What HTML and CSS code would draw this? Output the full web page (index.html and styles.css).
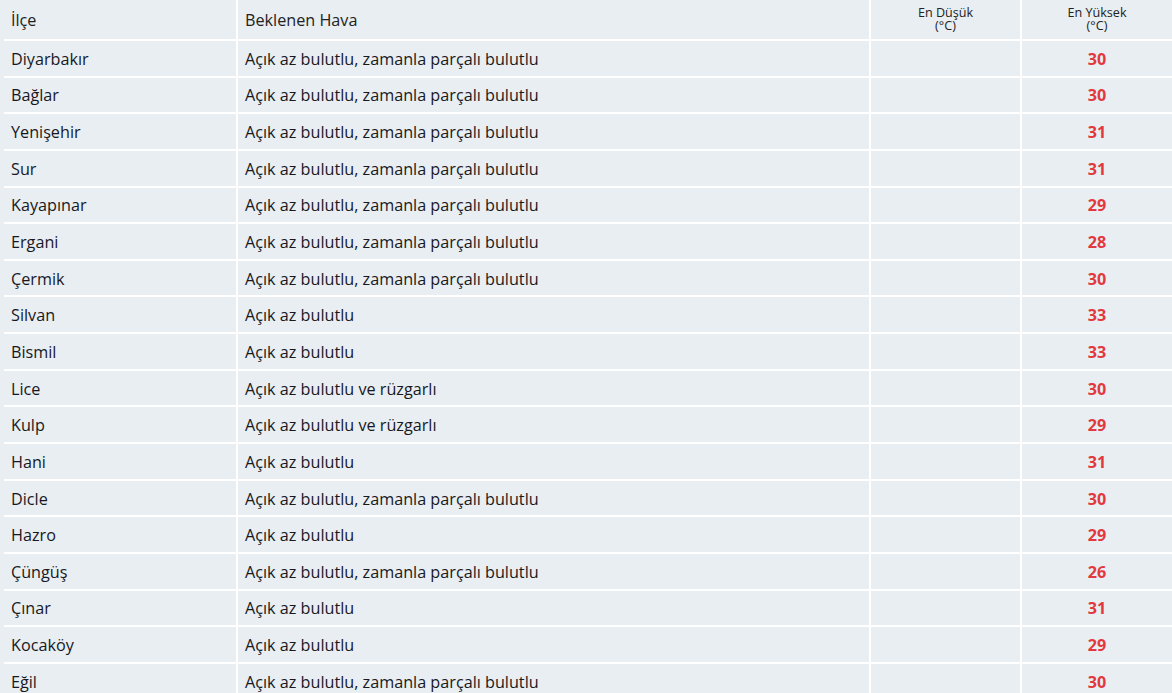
FILE: index.html
```html
<!DOCTYPE html>
<html lang="tr">
<head>
    <meta charset="UTF-8">
    <meta name="viewport" content="width=device-width, initial-scale=1.0">
    <title>Hava Durumu</title>
    <link rel="stylesheet" href="styles.css">
</head>
<body>
    <table class="forecast">
        <thead>
            <tr>
                <th class="col-name">İlçe</th>
                <th class="col-desc">Beklenen Hava</th>
                <th class="col-min small">En Düşük<br>(°C)</th>
                <th class="col-max small">En Yüksek<br>(°C)</th>
            </tr>
        </thead>
        <tbody>
            <tr><td>Diyarbakır</td><td>Açık az bulutlu, zamanla parçalı bulutlu</td><td></td><td class="max">30</td></tr>
            <tr><td>Bağlar</td><td>Açık az bulutlu, zamanla parçalı bulutlu</td><td></td><td class="max">30</td></tr>
            <tr><td>Yenişehir</td><td>Açık az bulutlu, zamanla parçalı bulutlu</td><td></td><td class="max">31</td></tr>
            <tr><td>Sur</td><td>Açık az bulutlu, zamanla parçalı bulutlu</td><td></td><td class="max">31</td></tr>
            <tr><td>Kayapınar</td><td>Açık az bulutlu, zamanla parçalı bulutlu</td><td></td><td class="max">29</td></tr>
            <tr><td>Ergani</td><td>Açık az bulutlu, zamanla parçalı bulutlu</td><td></td><td class="max">28</td></tr>
            <tr><td>Çermik</td><td>Açık az bulutlu, zamanla parçalı bulutlu</td><td></td><td class="max">30</td></tr>
            <tr><td>Silvan</td><td>Açık az bulutlu</td><td></td><td class="max">33</td></tr>
            <tr><td>Bismil</td><td>Açık az bulutlu</td><td></td><td class="max">33</td></tr>
            <tr><td>Lice</td><td>Açık az bulutlu ve rüzgarlı</td><td></td><td class="max">30</td></tr>
            <tr><td>Kulp</td><td>Açık az bulutlu ve rüzgarlı</td><td></td><td class="max">29</td></tr>
            <tr><td>Hani</td><td>Açık az bulutlu</td><td></td><td class="max">31</td></tr>
            <tr><td>Dicle</td><td>Açık az bulutlu, zamanla parçalı bulutlu</td><td></td><td class="max">30</td></tr>
            <tr><td>Hazro</td><td>Açık az bulutlu</td><td></td><td class="max">29</td></tr>
            <tr><td>Çüngüş</td><td>Açık az bulutlu, zamanla parçalı bulutlu</td><td></td><td class="max">26</td></tr>
            <tr><td>Çınar</td><td>Açık az bulutlu</td><td></td><td class="max">31</td></tr>
            <tr><td>Kocaköy</td><td>Açık az bulutlu</td><td></td><td class="max">29</td></tr>
            <tr><td>Eğil</td><td>Açık az bulutlu, zamanla parçalı bulutlu</td><td></td><td class="max">30</td></tr>
        </tbody>
    </table>
</body>
</html>
```

FILE: styles.css
```css
body {
    margin: 0;
    padding: 0 0 0 4px;
    background-color: #e8eef1;
    font-family: "Open Sans", "Liberation Sans", sans-serif;
    color: #18181f;
}
.forecast {
    width: 1168px;
    border-collapse: separate;
    border-spacing: 0;
    table-layout: fixed;
}
.forecast th,
.forecast td {
    border-bottom: 2px solid #fff;
    border-left: 2px solid #fff;
    padding: 1px 6px 0 7px;
    font-size: 16.2px;
    font-weight: normal;
    text-align: left;
    vertical-align: middle;
    line-height: 20px;
}
.forecast th:first-child,
.forecast td:first-child {
    border-left: none;
}
.forecast th {
    height: 38px;
    padding-top: 0;
    color: #222;
}
.forecast td {
    height: 33.65px;
}
.col-name {
    width: 219px;
}
.col-desc {
    width: 618px;
}
.col-min {
    width: 137px;
}
.forecast th.small {
    font-size: 12.6px;
    line-height: 13.5px;
    text-align: center;
    padding: 0 6px 1px;
}
.forecast td.max {
    text-align: center;
    color: #e2393f;
    font-weight: bold;
    padding: 1px 6px 0;
}
```
